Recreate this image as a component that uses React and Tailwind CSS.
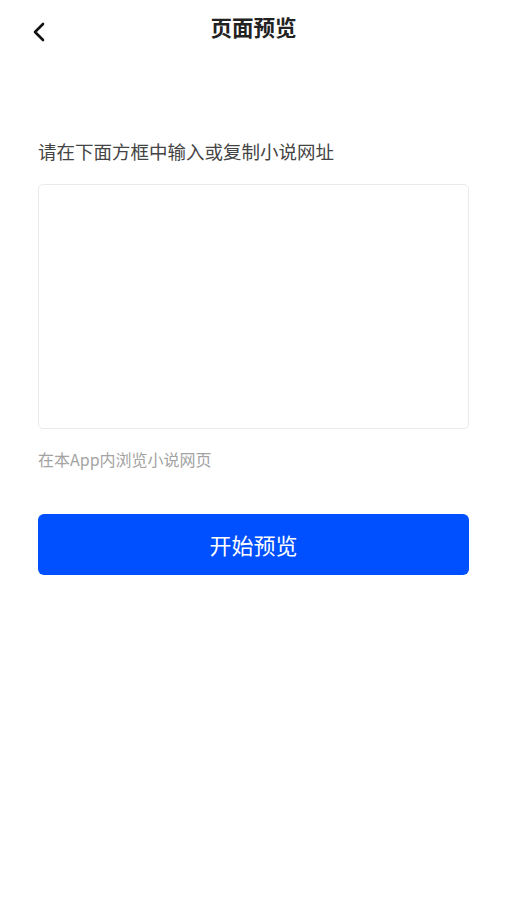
const font = { fontFamily: '"Noto Sans CJK SC", "Liberation Sans", sans-serif' };

export default function App() {
  return (
    <div className="min-h-[900px] w-full bg-white" style={font}>
      <div className="relative flex h-[56px] items-center justify-center">
        <button className="absolute left-[28px] top-[17px] p-1">
          <svg width="14" height="22" viewBox="0 0 14 22" fill="none">
            <path d="M11 3L3 11l8 8" stroke="#111" strokeWidth="2.6" strokeLinecap="round" strokeLinejoin="round" />
          </svg>
        </button>
        <h1 className="-mt-[1px] text-[21.5px] font-bold text-[#222]">页面预览</h1>
      </div>

      <div className="px-[38px] pt-[82px]">
        <p className="text-[18.5px] leading-[26px] text-[#444]">请在下面方框中输入或复制小说网址</p>
        <textarea className="mt-[20px] block h-[245px] w-full resize-none rounded-[5px] border border-[#ebebeb] p-3 text-[16px] outline-none" />
        <p className="mt-[19px] text-[16px] leading-[22px] text-[#a3a3a3]">在本App内浏览小说网页</p>
        <button className="mt-[44px] flex h-[61px] w-full items-center justify-center rounded-[6px] bg-[#0050ff] text-[22px] text-white">
          开始预览
        </button>
      </div>
    </div>
  );
}
